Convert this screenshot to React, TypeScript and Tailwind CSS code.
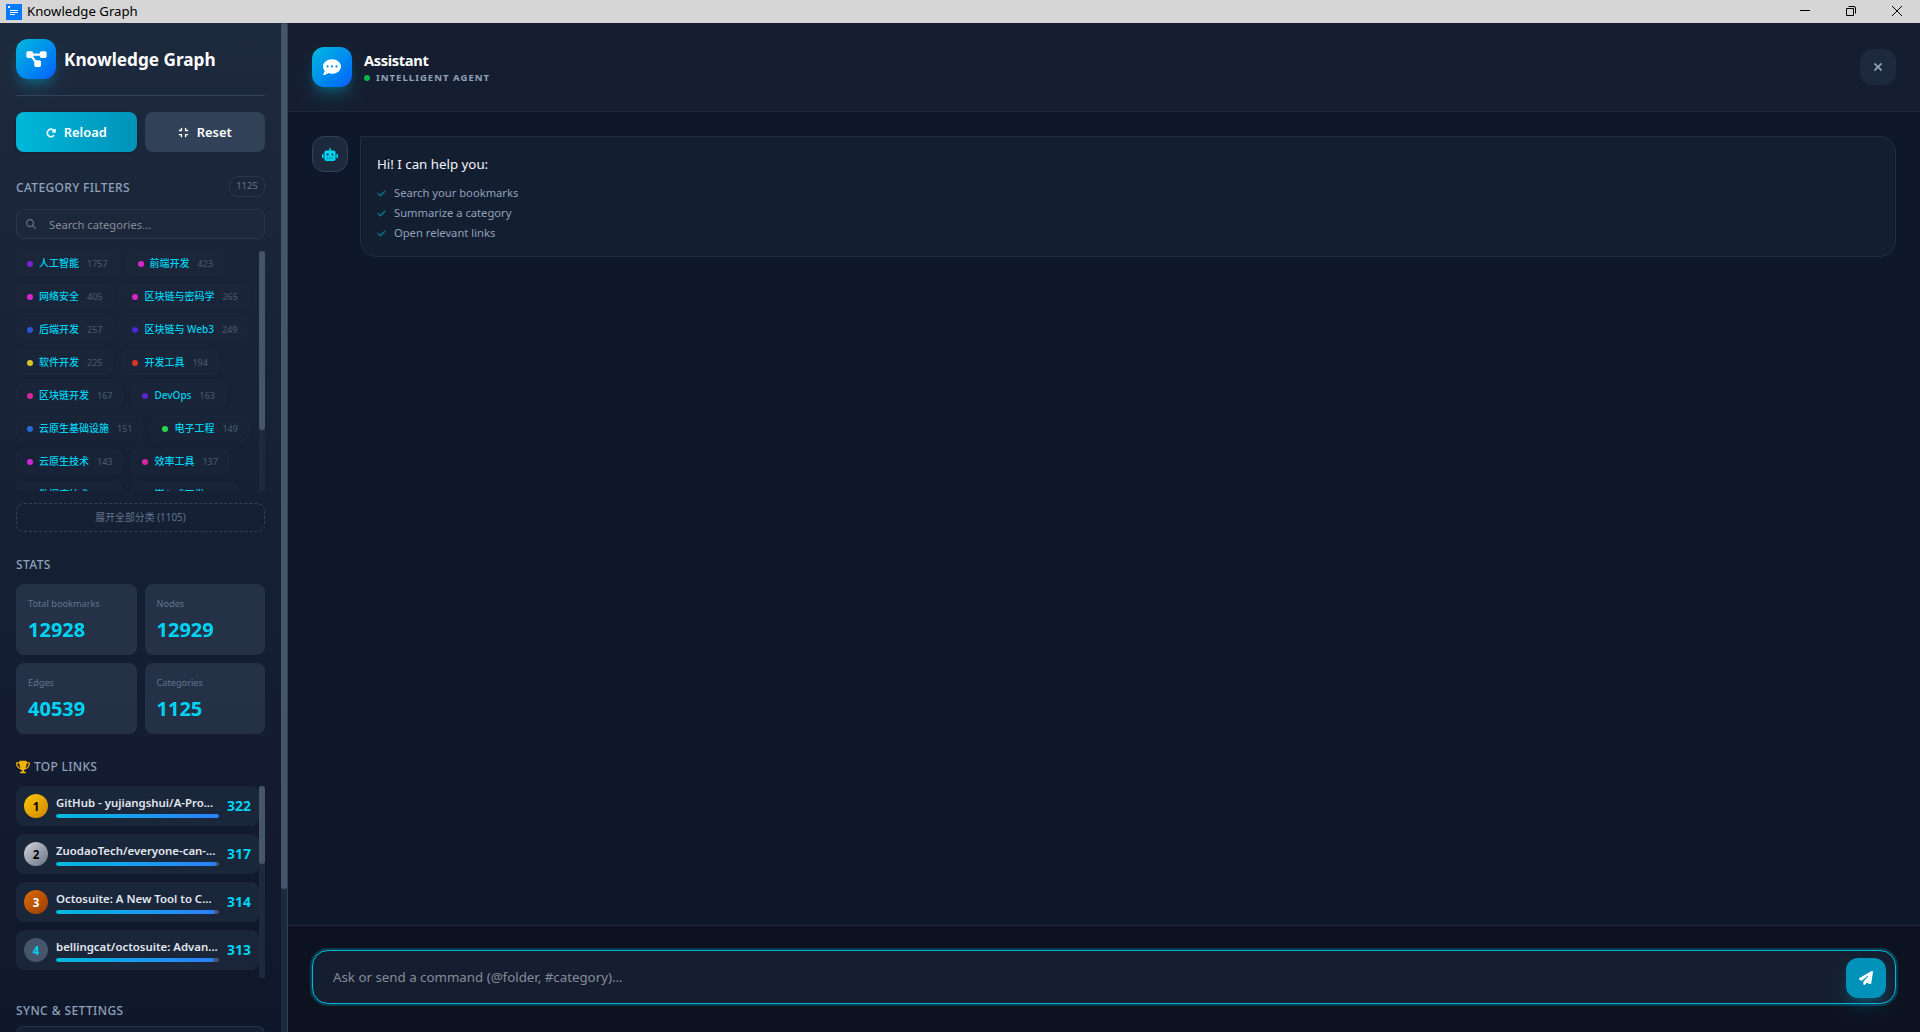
import { useState } from "react";
import {
  FaCheck,
  FaCommentDots,
  FaCompress,
  FaDiagramProject,
  FaMagnifyingGlass,
  FaPaperPlane,
  FaRobot,
  FaRotateRight,
  FaTrophy,
  FaXmark,
} from "react-icons/fa6";

const categories = [
  { name: "人工智能", count: 1757, dot: "bg-[#7e22d8]" },
  { name: "前端开发", count: 423, dot: "bg-[#d926c9]" },
  { name: "网络安全", count: 405, dot: "bg-[#d926d0]" },
  { name: "区块链与密码学", count: 265, dot: "bg-[#d926c9]" },
  { name: "后端开发", count: 257, dot: "bg-[#2657d9]" },
  { name: "区块链与 Web3", count: 249, dot: "bg-[#4a26d9]" },
  { name: "软件开发", count: 225, dot: "bg-[#d9c526]" },
  { name: "开发工具", count: 194, dot: "bg-[#d93526]" },
  { name: "区块链开发", count: 167, dot: "bg-[#d92699]" },
  { name: "DevOps", count: 163, dot: "bg-[#5726d9]" },
  { name: "云原生基础设施", count: 151, dot: "bg-[#266bd9]" },
  { name: "电子工程", count: 149, dot: "bg-[#26d94a]" },
  { name: "云原生技术", count: 143, dot: "bg-[#d426d9]" },
  { name: "效率工具", count: 137, dot: "bg-[#d926a3]" },
  { name: "数据库技术", count: 131, dot: "bg-[#2699d9]" },
  { name: "嵌入式开发", count: 128, dot: "bg-[#26d9b5]" },
];

const stats = [
  { label: "Total bookmarks", value: 12928 },
  { label: "Nodes", value: 12929 },
  { label: "Edges", value: 40539 },
  { label: "Categories", value: 1125 },
];

const topLinks = [
  {
    title: "GitHub - yujiangshui/A-Pro...",
    count: 322,
    badge: "bg-linear-to-br from-[#fdc700] to-[#d08700] text-black",
  },
  {
    title: "ZuodaoTech/everyone-can-...",
    count: 317,
    badge: "bg-linear-to-br from-[#d1d5dc] to-[#6a7282] text-black",
  },
  {
    title: "Octosuite: A New Tool to C...",
    count: 314,
    badge: "bg-linear-to-br from-[#e06c00] to-[#973c00] text-white",
  },
  {
    title: "bellingcat/octosuite: Advan...",
    count: 313,
    badge: "bg-[#45556c] text-[#00d3f2]",
  },
];

const abilities = [
  "Search your bookmarks",
  "Summarize a category",
  "Open relevant links",
];

const TitleBar = () => (
  <div className="flex h-[23px] shrink-0 items-center bg-[#d6d6d6] pl-1.5 text-black">
    <svg width="16" height="16" viewBox="0 0 16 16">
      <rect width="16" height="16" fill="#007bff" />
      <rect x="2" y="2" width="2" height="2" fill="#fff" />
      <path d="M4 6.5h8M4 8.5h8M4 10.5h5" stroke="#fff" />
    </svg>
    <span className="ml-[5px] text-[13.2px] leading-none">Knowledge Graph</span>
    <div className="ml-auto flex items-center">
      <svg width="126" height="23" viewBox="0 0 126 23" fill="none" stroke="#000">
        <path d="M6 10.5h10" />
        <path d="M52.5 8.5h7v7h-7z" />
        <path d="M54.5 6.5h5.5a1.5 1.5 0 0 1 1.5 1.5v5.5" />
        <path d="M98 6l10 10M108 6l-10 10" />
      </svg>
    </div>
  </div>
);

const Sidebar = () => {
  const [query, setQuery] = useState("");

  return (
    <aside className="flex w-[288px] shrink-0 border-r border-[#314158] bg-linear-to-b from-[#1d293d] to-[#0f172b]">
      <div className="flex w-[281px] flex-col overflow-hidden p-4">
        <div className="flex shrink-0 items-center gap-2 border-b border-[#314158] pb-4">
          <div className="flex size-10 items-center justify-center rounded-xl bg-linear-to-br from-[#00b8db] to-[#155dfc] text-white shadow-lg shadow-[#00b8db]/30">
            <FaDiagramProject className="h-[18px] w-[21px]" />
          </div>
          <h1 className="pt-0.5 text-[17.2px] leading-7 font-bold text-white">
            Knowledge Graph
          </h1>
        </div>

        <div className="mt-4 grid shrink-0 grid-cols-2 gap-2 text-[12.9px] font-semibold text-white">
          <button className="flex h-10 items-center justify-center gap-2 rounded-lg bg-linear-to-r from-[#00b8db] to-[#0092b8] pt-px shadow">
            <FaRotateRight
              className="size-2.5"
              stroke="currentColor"
              strokeWidth={20}
            />
            Reload
          </button>
          <button className="flex h-10 items-center justify-center gap-2 rounded-lg bg-[#314158] pt-px">
            <FaCompress className="size-[11px]" />
            Reset
          </button>
        </div>

        <div className="mt-6 flex h-[21px] shrink-0 items-center justify-between">
          <h2 className="pt-0.5 text-[12px] font-medium tracking-[0.35px] text-[#90a1b9]">
            CATEGORY FILTERS
          </h2>
          <span className="flex h-[21px] w-9 items-center justify-center rounded-lg border border-[#314158]/60 text-[9.5px] text-[#62748e]">
            1125
          </span>
        </div>

        <div className="mt-3 flex h-[30px] shrink-0 items-center rounded-lg border border-[#314158]/60 bg-[#1d293d]/50 pl-[9px] text-[#62748e]">
          <FaMagnifyingGlass className="size-2.5" />
          <input
            type="text"
            value={query}
            onChange={(e) => setQuery(e.target.value)}
            placeholder="Search categories..."
            className="ml-[13px] w-48 bg-transparent pt-0.5 text-[11.2px] placeholder-[#868c95] outline-none"
          />
        </div>

        <div className="mt-3 flex h-60 shrink-0 overflow-hidden">
          <div className="flex w-[243px] flex-wrap content-start gap-2">
            {categories.map((category) => (
              <button
                key={category.name}
                className="flex h-[25px] items-center rounded-lg border border-[#1d293d]/60 bg-[#1d293d]/40 px-2.5"
              >
                <span className={`size-1.5 rounded-full ${category.dot}`} />
                <span className="ml-1.5 text-[10px] font-medium whitespace-nowrap text-[#00d3f2]">
                  {category.name}
                </span>
                <span className="ml-2 text-[9px] font-medium text-[#45556c]">
                  {category.count}
                </span>
              </button>
            ))}
          </div>
          <div className="h-full w-1.5 shrink-0 bg-[#1d293d]">
            <div className="h-[179px] rounded-full bg-[#45556c]" />
          </div>
        </div>

        <button className="mt-3 h-[29px] shrink-0 rounded-lg border border-dashed border-[#314158] text-[9.9px] text-[#62748e]">
          展开全部分类 (1105)
        </button>

        <h2 className="mt-[25px] mb-[11px] shrink-0 text-[12px] leading-4 font-medium tracking-[0.4px] text-[#90a1b9]">
          STATS
        </h2>
        <div className="grid shrink-0 grid-cols-2 gap-2">
          {stats.map((stat) => (
            <div
              key={stat.label}
              className="flex h-[71px] flex-col rounded-lg bg-[#314158]/55 px-3 pt-3"
            >
              <span className="text-[9.2px] leading-4 text-[#62748e]">
                {stat.label}
              </span>
              <span className="mt-1 text-[20px] leading-7 font-bold text-[#00d3f2]">
                {stat.value}
              </span>
            </div>
          ))}
        </div>

        <h2 className="mt-[25px] mb-[11px] flex h-4 shrink-0 items-center gap-1 text-[12px] font-medium tracking-[0.3px] text-[#90a1b9]">
          <FaTrophy className="h-3.5 w-3.5 text-[#f0b100]" />
          TOP LINKS
        </h2>
        <div className="flex h-48 shrink-0 overflow-hidden">
          <div className="flex w-[243px] flex-col gap-2">
            {topLinks.map((link, index) => (
              <div
                key={link.title}
                className="flex h-10 items-center rounded-lg bg-[#1d293d]/80 pl-2"
              >
                <span
                  className={`flex size-6 items-center justify-center rounded-full pt-px text-[11.5px] font-bold ${link.badge}`}
                >
                  {index + 1}
                </span>
                <div className="ml-2 w-[163px]">
                  <p className="text-[11.4px] leading-4 font-semibold whitespace-nowrap text-[#e2e8f0]">
                    {link.title}
                  </p>
                  <div className="mt-[3px] h-1 overflow-hidden rounded-full bg-[#45556c]">
                    <div
                      className="h-full rounded-full bg-linear-to-r from-[#00b8db] to-[#2b7fff]"
                      style={{ width: `${(link.count / 322) * 100}%` }}
                    />
                  </div>
                </div>
                <span className="ml-2 text-[13.9px] font-bold text-[#00d3f2]">
                  {link.count}
                </span>
              </div>
            ))}
          </div>
          <div className="h-full w-1.5 shrink-0 bg-[#1d293d]">
            <div className="h-[78px] rounded-full bg-[#45556c]" />
          </div>
        </div>

        <h2 className="mt-[25px] shrink-0 text-[12px] leading-4 font-medium tracking-[0.4px] text-[#90a1b9]">
          SYNC &amp; SETTINGS
        </h2>
        <div className="mt-[7px] h-20 shrink-0 rounded-lg border border-[#314158]/60 bg-[#1d293d]/50" />
      </div>
      <div className="w-1.5 bg-[#1d293d]">
        <div className="h-[866px] rounded-full bg-[#45556c]" />
      </div>
    </aside>
  );
};

const Chat = () => {
  const [message, setMessage] = useState("");

  return (
    <main className="flex flex-1 flex-col bg-[#0f172b]">
      <header className="flex h-[89px] shrink-0 items-center justify-between border-b border-[#1d293d] bg-[#151e30] px-6">
        <div className="flex items-center gap-3">
          <div className="flex size-10 items-center justify-center rounded-xl bg-linear-to-br from-[#00b8db] to-[#155dfc] text-white shadow-lg shadow-[#00b8db]/30">
            <FaCommentDots className="size-[18px]" />
          </div>
          <div className="pt-0.5">
            <h2 className="text-[14.7px] leading-5 font-bold tracking-tight text-white">
              Assistant
            </h2>
            <p className="flex items-center gap-1.5 text-[9.6px] leading-4 font-bold tracking-[1px] text-[#90a1b9]">
              <span className="size-1.5 rounded-full bg-[#00b84a]" />
              INTELLIGENT AGENT
            </p>
          </div>
        </div>
        <button className="flex size-9 items-center justify-center rounded-xl bg-[#1d293d] text-[#90a1b9]">
          <FaXmark className="size-3" stroke="currentColor" strokeWidth={20} />
        </button>
      </header>

      <section className="flex flex-1 items-start gap-3 p-6">
        <div className="flex size-9 shrink-0 items-center justify-center rounded-xl border border-[#314158] bg-[#1d293d] text-[#00d3f2]">
          <FaRobot className="h-[13px] w-4" />
        </div>
        <div className="h-[121px] flex-1 rounded-2xl rounded-tl-none border border-[#1f2d42] bg-[#141e31] px-4 pt-4">
          <p className="text-[13.3px] leading-[23px] text-[#f1f5f9]">
            Hi! I can help you:
          </p>
          <ul className="mt-[7px]">
            {abilities.map((ability) => (
              <li
                key={ability}
                className="flex h-5 items-center gap-2 text-[11.2px] text-[#90a1b9]"
              >
                <FaCheck
                  className="size-[9px] text-[#08748f]"
                  stroke="currentColor"
                  strokeWidth={20}
                />
                {ability}
              </li>
            ))}
          </ul>
        </div>
      </section>

      <footer className="h-[107px] shrink-0 border-t border-[#1d293d] bg-[#0c1220] p-6">
        <div className="flex h-[54px] items-center rounded-2xl border border-[#00b8db] bg-[#151e30] pt-0.5 pr-[9px] pl-5 ring-2 ring-[#00b8db]/25">
          <input
            type="text"
            value={message}
            onChange={(e) => setMessage(e.target.value)}
            placeholder="Ask or send a command (@folder, #category)..."
            className="flex-1 bg-transparent text-[13.3px] text-white placeholder-[#868c95] outline-none"
          />
          <button className="flex size-10 items-center justify-center rounded-xl bg-[#0092b8] text-white shadow-lg shadow-[#0092b8]/30">
            <FaPaperPlane className="size-3.5" />
          </button>
        </div>
      </footer>
    </main>
  );
};

const App = () => (
  <div className="flex h-[1032px] w-[1920px] flex-col overflow-hidden font-['Noto_Sans','Noto_Sans_CJK_SC',sans-serif]">
    <TitleBar />
    <div className="flex min-h-0 flex-1">
      <Sidebar />
      <Chat />
    </div>
  </div>
);

export default App;
